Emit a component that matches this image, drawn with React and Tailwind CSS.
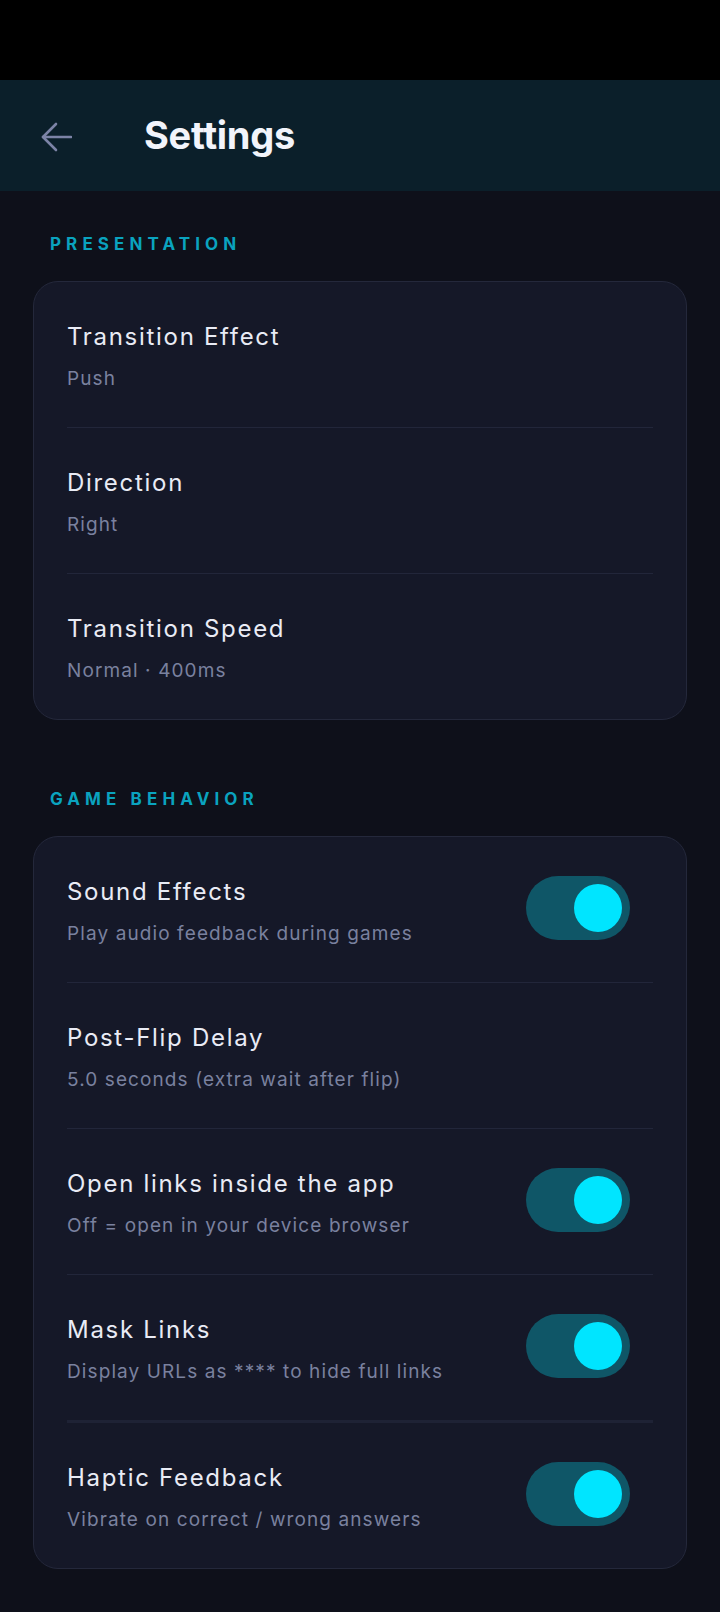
import { useState } from 'react';

const presentation = [
  { title: 'Transition Effect', sub: 'Push' },
  { title: 'Direction', sub: 'Right' },
  { title: 'Transition Speed', sub: 'Normal · 400ms' },
];

const behavior = [
  { key: 'sound', title: 'Sound Effects', sub: 'Play audio feedback during games', toggle: true },
  { key: 'delay', title: 'Post-Flip Delay', sub: '5.0 seconds (extra wait after flip)' },
  { key: 'links', title: 'Open links inside the app', sub: 'Off = open in your device browser', toggle: true },
  { key: 'mask', title: 'Mask Links', sub: 'Display URLs as **** to hide full links', toggle: true, thick: true },
  { key: 'haptic', title: 'Haptic Feedback', sub: 'Vibrate on correct / wrong answers', toggle: true },
];

function Toggle({ on, onClick }) {
  return (
    <button
      onClick={onClick}
      className={`mr-[23px] -mt-[8px] flex h-[64px] w-[104px] shrink-0 items-center rounded-full px-[8px] ${on ? 'justify-end bg-[#0f5667]' : 'justify-start bg-[#2a2f45]'}`}
    >
      <span className={`block h-[48px] w-[48px] rounded-full ${on ? 'bg-[#00e5ff]' : 'bg-[#7d84a3]'}`} />
    </button>
  );
}

function Row({ title, sub, last, thick, children }) {
  return (
    <div
      className={`flex items-center justify-between pt-[40px] pb-[36px] ${last ? '' : thick ? 'border-b-[3px] border-[#1e2235]' : 'border-b border-[#22263a]'}`}
    >
      <div>
        <p className="text-[24px] leading-[30px] tracking-[1.7px] text-[#e9ebf5]">{title}</p>
        <p className="mt-[15px] text-[19px] leading-[24px] tracking-[1.1px] text-[#7a819f]">{sub}</p>
      </div>
      {children}
    </div>
  );
}

function Section({ label, children }) {
  return (
    <section className="px-[33px] pt-[41px] pb-[26px]">
      <h2 className="mb-[25px] pl-[17px] text-[17px] font-bold leading-[24px] tracking-[0.3em] text-[#0aa3bf]">{label}</h2>
      <div className="rounded-[25px] border border-[#24283b] bg-[#151828] px-[33px]">{children}</div>
    </section>
  );
}

export default function App() {
  const [toggles, setToggles] = useState({ sound: true, links: true, mask: true, haptic: true });

  return (
    <div className="min-h-[1612px] bg-[#0e101a]" style={{ fontFamily: 'Inter, "Noto Sans", sans-serif' }}>
      <div className="h-[80px] bg-black" />
      <header className="flex h-[111px] items-center bg-[#0b1f2a]">
        <button className="ml-[41px] mt-[2px]">
          <svg width="31" height="30" viewBox="0 0 31 30" fill="none" stroke="#7c83a6" strokeWidth="2.6" strokeLinecap="round" strokeLinejoin="round">
            <path d="M30 15H2" />
            <path d="M15 2 2 15l13 13" />
          </svg>
        </button>
        <h1 className="ml-[72px] text-[38px] font-bold tracking-[-0.3px] text-[#f2f4fb]">Settings</h1>
      </header>

      <Section label="PRESENTATION">
        {presentation.map((r, i) => (
          <Row key={r.title} title={r.title} sub={r.sub} last={i === presentation.length - 1} />
        ))}
      </Section>

      <Section label="GAME BEHAVIOR">
        {behavior.map((r, i) => (
          <Row key={r.key} title={r.title} sub={r.sub} thick={r.thick} last={i === behavior.length - 1}>
            {r.toggle && (
              <Toggle
                on={toggles[r.key]}
                onClick={() => setToggles({ ...toggles, [r.key]: !toggles[r.key] })}
              />
            )}
          </Row>
        ))}
      </Section>
    </div>
  );
}
